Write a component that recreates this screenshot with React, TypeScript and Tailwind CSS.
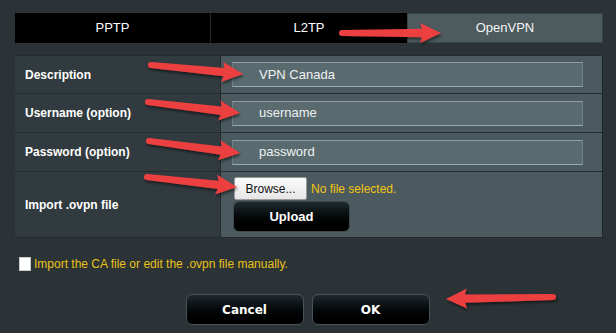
import React from "react";

type Pt = [number, number];

function arrowPoints(tail: Pt, tip: Pt, headLen = 19, headHalf = 10, tailHalf = 3, neckHalf = 4.2): string {
  const dx = tip[0] - tail[0];
  const dy = tip[1] - tail[1];
  const len = Math.hypot(dx, dy);
  const ux = dx / len;
  const uy = dy / len;
  const nx = -uy;
  const ny = ux;
  const bx = tip[0] - ux * headLen;
  const by = tip[1] - uy * headLen;
  const pts: Pt[] = [
    [tail[0] + nx * tailHalf, tail[1] + ny * tailHalf],
    [bx + nx * neckHalf, by + ny * neckHalf],
    [bx + nx * headHalf - ux * 2, by + ny * headHalf - uy * 2],
    [tip[0], tip[1]],
    [bx - nx * headHalf - ux * 2, by - ny * headHalf - uy * 2],
    [bx - nx * neckHalf, by - ny * neckHalf],
    [tail[0] - nx * tailHalf, tail[1] - ny * tailHalf],
  ];
  return pts.map((p) => `${p[0].toFixed(1)},${p[1].toFixed(1)}`).join(" ");
}

const arrows: { tail: Pt; tip: Pt }[] = [
  { tail: [342, 33], tip: [441, 33] },
  { tail: [151, 65], tip: [243, 74] },
  { tail: [148, 102], tip: [240, 113] },
  { tail: [149, 141], tip: [240, 153] },
  { tail: [147, 177], tip: [237, 187] },
  { tail: [553, 297], tip: [446, 299] },
];

function Arrows() {
  return (
    <svg className="absolute left-0 top-0 pointer-events-none" width={616} height={333} viewBox="0 0 616 333">
      <defs>
        <filter id="sh" x="-20%" y="-50%" width="140%" height="200%">
          <feDropShadow dx="1" dy="2" stdDeviation="1.5" floodColor="#000" floodOpacity="0.55" />
        </filter>
      </defs>
      {arrows.map((a, i) => (
        <g key={i} filter="url(#sh)">
          <polygon points={arrowPoints(a.tail, a.tip)} fill="#ec4040" strokeLinejoin="round" />
          <circle cx={a.tail[0]} cy={a.tail[1]} r={3} fill="#ec4040" />
        </g>
      ))}
    </svg>
  );
}

function Row({ label, h, children }: { label: string; h: string; children: React.ReactNode }) {
  return (
    <div className={`flex ${h} border-b border-[#242c2f]`}>
      <div className="w-[206px] shrink-0 bg-[#313a3e] border-r border-[#242c2f] flex items-center pl-[10px] text-[12px] font-bold text-white">
        {label}
      </div>
      <div className="flex-1 bg-[#4b5a5e] flex items-center pl-[11px]">{children}</div>
    </div>
  );
}

function Input({ value }: { value: string }) {
  return (
    <div className="w-[351px] h-[25px] bg-[#5a6b6f] border border-[#6f8285] border-t-[#8ea0a3] border-b-[#9aabad] flex items-center pl-[26px] text-[13px] text-[#eef2f2]">
      {value}
    </div>
  );
}

export default function App() {
  return (
    <div
      className="relative w-[616px] h-[333px] overflow-hidden bg-[#2b3336] px-[15px] pt-[13px]"
      style={{ fontFamily: '"Liberation Sans", Arial, sans-serif' }}
    >
      {/* tabs */}
      <div className="flex h-[30px] w-[588px] text-[13px]">
        <div className="w-[196px] bg-black flex items-center justify-center text-white border-r border-[#2a2a2a]">PPTP</div>
        <div className="w-[196px] bg-black flex items-center justify-center text-white">L2TP</div>
        <div className="w-[196px] bg-[#4d5a5e] flex items-center justify-center text-[#f2f4f4] border border-[#3a4549]">OpenVPN</div>
      </div>

      {/* table */}
      <div className="mt-[12px] w-[588px] border-t border-[#242c2f] border-r border-r-[#1f2629]">
        <Row label="Description" h="h-[38px]">
          <Input value="VPN Canada" />
        </Row>
        <Row label="Username (option)" h="h-[39px]">
          <Input value="username" />
        </Row>
        <Row label="Password (option)" h="h-[39px]">
          <Input value="password" />
        </Row>
        <div className="flex h-[66px] border-b border-[#242c2f]">
          <div className="w-[206px] shrink-0 bg-[#313a3e] border-r border-[#242c2f] flex items-center pl-[10px] text-[12px] font-bold text-white">
            Import .ovpn file
          </div>
          <div className="flex-1 bg-[#4b5a5e] flex flex-col pl-[12px] pt-[5px]">
            <div className="flex items-center h-[23px]">
              <div className="ml-[1px] h-[23px] w-[73px] bg-gradient-to-b from-[#fbfbfb] to-[#e6e6e6] border border-[#9a9a9a] rounded-[2px] flex items-center justify-center text-[12px] text-[#111]">
                Browse...
              </div>
              <span className="ml-[4px] text-[12px] text-[#f2c414]">No file selected.</span>
            </div>
            <div className="mt-[1px] h-[31px] w-[117px] rounded-[6px] border border-[#3e4a4e] bg-gradient-to-b from-[#1f2a2e] to-[#000] flex items-center justify-center text-[13px] font-bold text-white">
              Upload
            </div>
          </div>
        </div>
      </div>

      {/* checkbox */}
      <div className="mt-[19px] flex items-center h-[14px] pl-[4px]">
        <div className="w-[12px] h-[14px] bg-white border border-[#ccc]" />
        <span className="ml-[3px] text-[12px] text-[#e9c21a]">Import the CA file or edit the .ovpn file manually.</span>
      </div>

      {/* buttons */}
      <div className="mt-[23px] flex justify-center gap-[8px] pr-[1px]">
        <div
          className="w-[118px] h-[31px] rounded-[6px] border border-[#47535a] bg-gradient-to-b from-[#1f292d] to-[#000] flex items-center justify-center text-[12px] font-bold text-white"
          style={{ fontFamily: '"DejaVu Sans", Verdana, sans-serif' }}
        >
          Cancel
        </div>
        <div
          className="w-[118px] h-[31px] rounded-[6px] border border-[#47535a] bg-gradient-to-b from-[#1f292d] to-[#000] flex items-center justify-center text-[12px] font-bold text-white"
          style={{ fontFamily: '"DejaVu Sans", Verdana, sans-serif' }}
        >
          OK
        </div>
      </div>

      <Arrows />
    </div>
  );
}
